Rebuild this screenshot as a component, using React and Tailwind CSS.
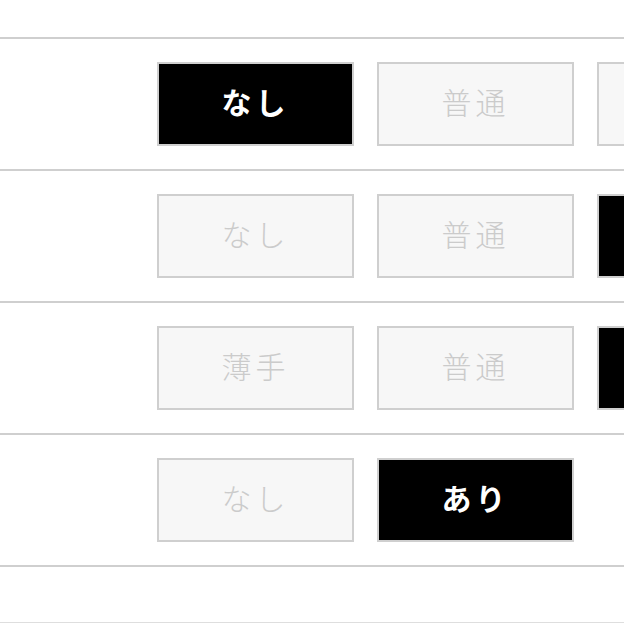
// Option selector rows — each row has a set of toggle buttons, one selected (black)

const rows = [
  { options: ['なし', '普通', '厚手'], selected: 0 },
  { options: ['なし', '普通', 'あり'], selected: 2 },
  { options: ['薄手', '普通', '厚手'], selected: 2 },
  { options: ['なし', 'あり'], selected: 1 },
]

const OptionButton = ({ label, active }) => (
  <div
    className={
      active
        ? 'w-[197px] h-[84px] shrink-0 border-2 border-[#cfcfcf] bg-black text-white font-bold flex items-center justify-center pb-[6px] text-[30px] tracking-[4px]'
        : 'w-[197px] h-[84px] shrink-0 border-2 border-[#cfcfcf] bg-[#f7f7f7] text-[#cbcbcb] font-light flex items-center justify-center pb-[6px] text-[30px] tracking-[4px]'
    }
  >
    {label}
  </div>
)

const App = () => {
  return (
    <div
      className="w-[624px] h-[624px] overflow-hidden bg-white"
      style={{ fontFamily: '"Noto Sans CJK JP", "Noto Sans", sans-serif' }}
    >
      <div className="h-[37px]"></div>

      {rows.map((row, i) => (
        <div
          key={i}
          className="border-t-2 border-[#cfcfcf] py-[23px] pl-[157px] flex gap-[23px] overflow-hidden"
        >
          {row.options.map((opt, j) => (
            <OptionButton key={j} label={opt} active={j === row.selected} />
          ))}
        </div>
      ))}

      <div className="border-t-2 border-[#cfcfcf] h-[57px]"></div>
      <div className="border-t border-[#dedede] h-[20px]"></div>
    </div>
  )
}

export default App
